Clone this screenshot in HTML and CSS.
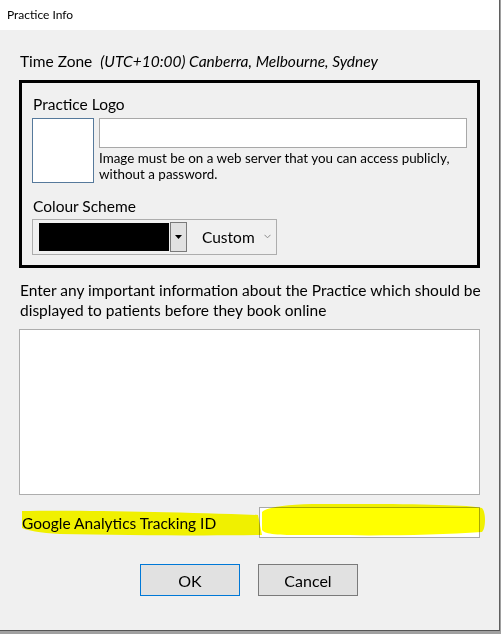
FILE: index.html
```html
<!DOCTYPE html>
<html lang="en">
<head>
    <meta charset="UTF-8">
    <meta name="viewport" content="width=device-width, initial-scale=1.0">
    <title>Practice Info</title>
    <link rel="stylesheet" href="styles.css">
</head>
<body>
    <div class="dialog">
        <div class="titlebar">Practice Info</div>

        <div class="content">
            <div class="timezone">
                <span class="tz-label">Time Zone</span>
                <span class="tz-value">(UTC+10:00) Canberra, Melbourne, Sydney</span>
            </div>

            <div class="logo-box">
                <div class="field-label">Practice Logo</div>
                <div class="logo-row">
                    <div class="logo-preview"></div>
                    <div class="logo-fields">
                        <div class="text-input url-input"></div>
                        <div class="hint">Image must be on a web server that you can access publicly,<br>without a password.</div>
                    </div>
                </div>

                <div class="field-label scheme-label">Colour Scheme</div>
                <div class="scheme">
                    <div class="swatch"></div>
                    <div class="drop-btn">
                        <svg width="7" height="4" viewBox="0 0 7 4"><polygon points="0,0 7,0 3.5,4" fill="#000"/></svg>
                    </div>
                    <div class="scheme-name">Custom</div>
                    <svg class="chevron" width="7" height="5" viewBox="0 0 7 5"><polyline points="0.5,0.8 3.5,3.8 6.5,0.8" fill="none" stroke="#8a8a8a" stroke-width="1"/></svg>
                </div>
            </div>

            <p class="notes-label">Enter any important information about the Practice which should be<br>displayed to patients before they book online</p>
            <div class="notes"></div>

            <div class="ga-row">
                <span class="ga-label">Google Analytics Tracking ID</span>
                <div class="text-input ga-input"></div>
                <!-- highlighter marks drawn over the row -->
                <svg class="marker" width="500" height="42" viewBox="0 0 500 42">
                    <path d="M22 7 C80 6 180 8 258 11 L262 31 C200 32 120 31 60 30 C40 29 26 26 22 24 Z" fill="#ffff00"/>
                    <path d="M262 8 C270 1 300 -1 360 0 C420 0 470 1 482 4 C486 8 486 24 482 28 C440 31 380 32 330 31 C290 31 266 32 262 26 Z" fill="#ffff00"/>
                </svg>
            </div>

            <div class="buttons">
                <button class="btn btn-default">OK</button>
                <button class="btn">Cancel</button>
            </div>
        </div>
    </div>
</body>
</html>
```

FILE: styles.css
```css
html, body {
    margin: 0;
    padding: 0;
}
body {
    width: 501px;
    height: 634px;
    background: #a0a0a0;
    font-family: Lato, "Liberation Sans", sans-serif;
    color: #000;
    overflow: hidden;
}
.dialog {
    width: 499px;
    height: 630px;
    background: #f0f0f0;
    border-right: 1px solid #5f5f5f;
    border-bottom: 1px solid #555;
}
.titlebar {
    height: 30px;
    background: #fff;
    font-size: 12px;
    line-height: 30px;
    padding-left: 7px;
}
.content {
    padding: 21px 0 0 19px;
}
.timezone {
    font-size: 15.5px;
    line-height: 20px;
    padding-left: 1px;
}
.tz-value {
    font-style: italic;
    margin-left: 4px;
}
.logo-box {
    margin-top: 9px;
    border: 3px solid #000;
    padding: 11px 0 10px 10px;
    width: 445px;
}
.field-label {
    font-size: 15.5px;
    line-height: 20px;
    padding-left: 1px;
}
.logo-row {
    display: flex;
    gap: 5px;
    margin-top: 4px;
}
.logo-preview {
    width: 60px;
    height: 63px;
    background: #fff;
    border: 1px solid #56799b;
}
.text-input {
    background: #fff;
    border: 1px solid #a8a8a8;
}
.url-input {
    width: 366px;
    height: 28px;
}
.hint {
    font-size: 13.4px;
    line-height: 16px;
    margin-top: 2px;
    white-space: nowrap;
}
.scheme-label {
    margin-top: 13px;
}
.scheme {
    display: flex;
    align-items: center;
    height: 34px;
    margin-top: 3px;
    border: 1px solid #adadad;
    padding-left: 6px;
    width: 237px;
}
.swatch {
    width: 130px;
    height: 28px;
    background: #000;
}
.drop-btn {
    width: 15px;
    height: 28px;
    margin-left: 1px;
    background: #e1e1e1;
    border: 1px solid #7a7a7a;
    display: flex;
    align-items: center;
    justify-content: center;
}
.scheme-name {
    font-size: 15.5px;
    margin-left: 15px;
}
.chevron {
    margin-left: 9px;
    margin-top: -2px;
}
.notes-label {
    margin: 12px 0 0 1px;
    font-size: 15.5px;
    line-height: 20px;
    white-space: nowrap;
}
.notes {
    width: 459px;
    height: 164px;
    margin-top: 9px;
    background: #fff;
    border: 1px solid #adadad;
}
.ga-row {
    position: relative;
    display: flex;
    align-items: center;
    margin: 12px 0 0 -19px;
    padding-left: 22px;
}
.ga-label {
    font-size: 15.5px;
    width: 237px;
}
.ga-input {
    width: 219px;
    height: 29px;
}
.marker {
    position: absolute;
    left: 0;
    top: -3px;
    mix-blend-mode: multiply;
    pointer-events: none;
}
.buttons {
    display: flex;
    gap: 18px;
    margin: 26px 0 0 121px;
}
.btn {
    width: 100px;
    height: 32px;
    background: #e1e1e1;
    border: 1px solid #7a7a7a;
    font-family: Lato, "Liberation Sans", sans-serif;
    font-size: 16px;
    color: #000;
    padding: 0;
}
.btn-default {
    border-color: #0078d7;
}
```
